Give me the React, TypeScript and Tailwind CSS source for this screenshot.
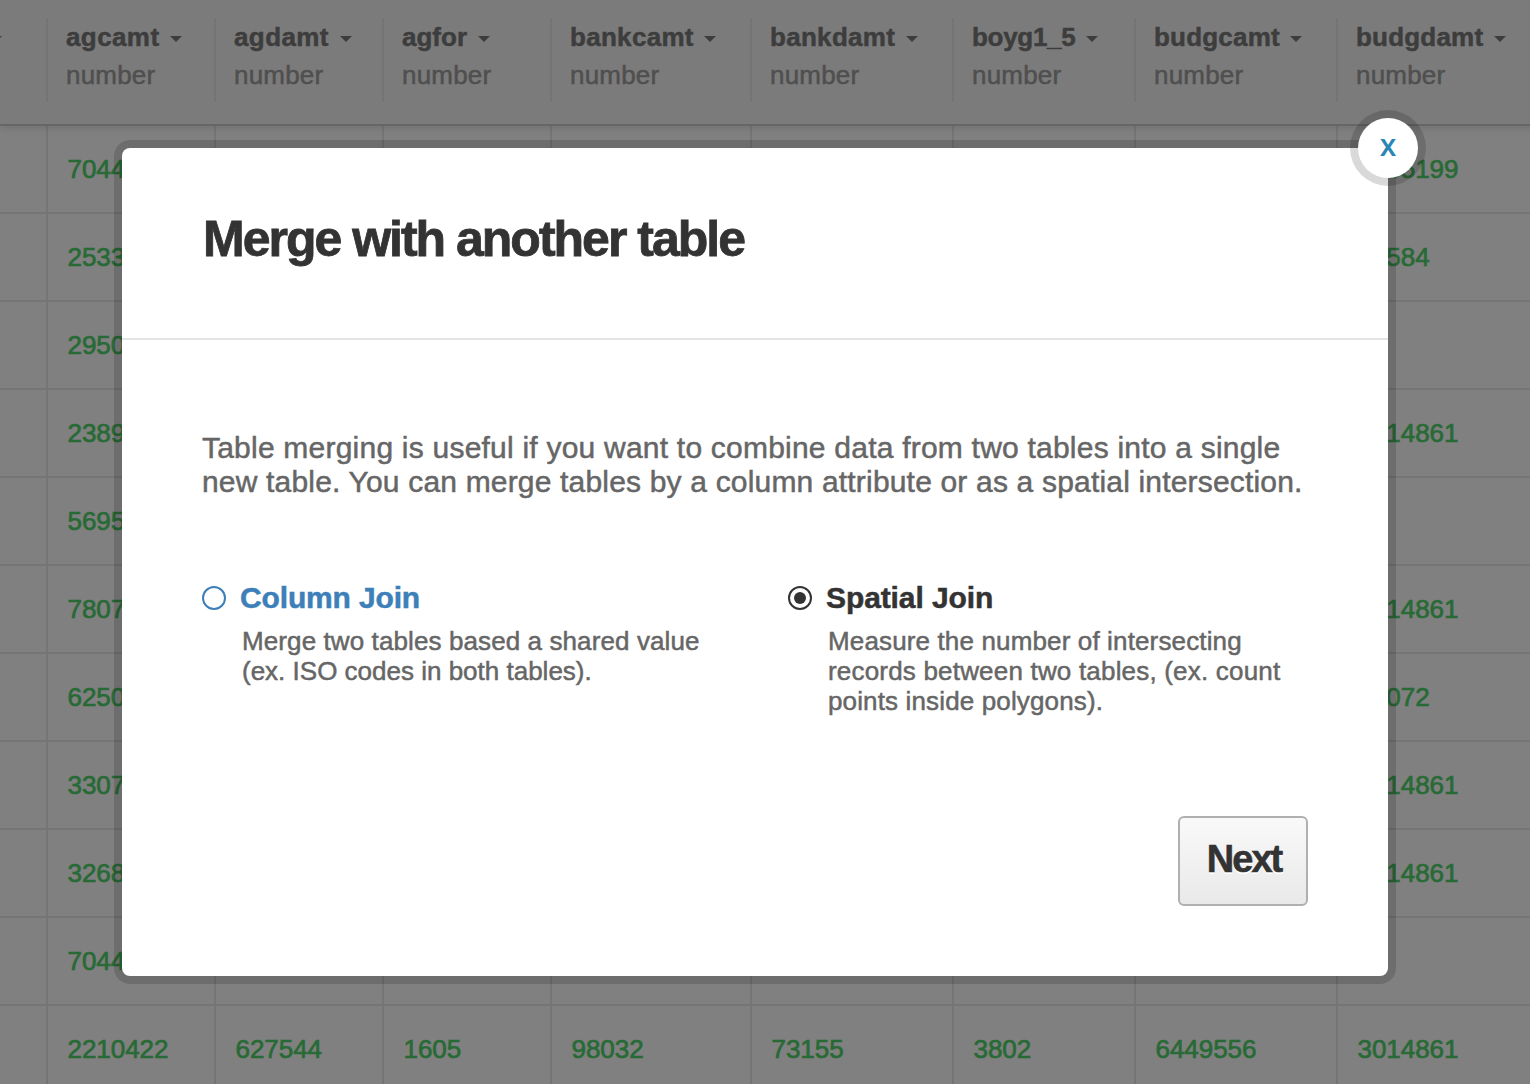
import React from "react";

type Column = { name: string; width: string; tracking: string; gap: string };

const columns: Column[] = [
  { name: "agcamt", width: "w-[168px]", tracking: "tracking-[0.4px]", gap: "left-[122px]" },
  { name: "agdamt", width: "w-[168px]", tracking: "tracking-[0.4px]", gap: "left-[124px]" },
  { name: "agfor", width: "w-[168px]", tracking: "tracking-[0px]", gap: "left-[94px]" },
  { name: "bankcamt", width: "w-[200px]", tracking: "tracking-[0.3px]", gap: "left-[152px]" },
  { name: "bankdamt", width: "w-[202px]", tracking: "tracking-[0.3px]", gap: "left-[154px]" },
  { name: "boyg1_5", width: "w-[182px]", tracking: "tracking-[-0.3px]", gap: "left-[132px]" },
  { name: "budgcamt", width: "w-[202px]", tracking: "tracking-[0.2px]", gap: "left-[154px]" },
  { name: "budgdamt", width: "w-[202px]", tracking: "tracking-[0.2px]", gap: "left-[156px]" },
];

const rows: string[][] = [
  ["7044", "", "", "", "", "", "", "3305199"],
  ["2533", "", "", "", "", "", "", "32584"],
  ["2950", "", "", "", "", "", "", ""],
  ["2389", "", "", "", "", "", "", "3014861"],
  ["5695", "", "", "", "", "", "", ""],
  ["7807", "", "", "", "", "", "", "3014861"],
  ["6250", "", "", "", "", "", "", "30072"],
  ["3307", "", "", "", "", "", "", "3014861"],
  ["3268", "", "", "", "", "", "", "3014861"],
  ["7044", "", "", "", "", "", "", ""],
  ["2210422", "627544", "1605", "98032", "73155", "3802", "6449556", "3014861"],
];

function Caret() {
  return (
    <svg width="12" height="6" viewBox="0 0 12 6" className="block fill-[#3d3d3d]">
      <path d="M0 0H12L6 6Z" />
    </svg>
  );
}

function HeaderRow() {
  return (
    <div className="relative flex h-[126px] w-[1600px] border-b-2 border-[#666666] bg-[#7b7b7b] shadow-[0_2px_8px_rgba(0,0,0,0.12)]">
      <div className="relative mt-[18px] h-[84px] w-12 shrink-0 border-r-2 border-[#747474]">
        <div className="absolute -left-[10px] top-[18px]"><Caret /></div>
      </div>
      {columns.map((c) => (
        <div key={c.name} className={`relative mt-[18px] h-[84px] shrink-0 border-r-2 border-[#747474] pl-[18px] ${c.width}`}>
          <div className={`h-[38px] text-[26px] leading-[38px] font-bold text-[#3d3d3d] [-webkit-text-stroke:0.5px] ${c.tracking}`}>{c.name}</div>
          <div className="text-[26px] leading-[38px] tracking-[0.2px] text-[#4f4f4f] [-webkit-text-stroke:0.5px]">number</div>
          <div className={`absolute top-[18px] ${c.gap}`}><Caret /></div>
        </div>
      ))}
    </div>
  );
}

function Radio({ checked }: { checked?: boolean }) {
  return (
    <span className={`mt-[14px] flex size-6 shrink-0 items-center justify-center rounded-full border-2 ${checked ? "border-[#333333]" : "border-[#3d7fb8]"}`}>
      {checked && <span className="size-3 rounded-full bg-[#333333]" />}
    </span>
  );
}

export default function App() {
  return (
    <div className="relative h-[1084px] w-[1530px] overflow-hidden bg-[#808080] font-['Liberation_Sans',Arial,sans-serif] whitespace-nowrap">
      <HeaderRow />
      {rows.map((row, i) => (
        <div key={i} className="flex h-[88px] w-[1600px] border-b-2 border-[#757575]">
          <div className="w-12 shrink-0 border-r-2 border-[#757575]" />
          {row.map((v, j) => (
            <div key={j} className={`shrink-0 border-r-2 border-[#757575] pl-[19.5px] text-[26px] leading-[86px] tracking-[-0.05px] text-[#286a35] [-webkit-text-stroke:0.7px] ${columns[j].width}`}>
              {v}
            </div>
          ))}
        </div>
      ))}

      <div className="absolute left-[122px] top-[148px] h-[828px] w-[1266px] rounded-lg bg-white shadow-[0_0_0_8px_rgba(0,0,0,0.15)]">
        <div className="h-[192px] border-b-2 border-[#e4e4e4] pl-[81px] pt-[61px]">
          <h1 className="text-[50px] leading-[60px] font-bold tracking-[-2px] text-[#333333] [-webkit-text-stroke:0.8px]">Merge with another table</h1>
        </div>
        <div className="px-20 pt-[91px]">
          <p className="text-[30px] leading-[34px] text-[#666666] [-webkit-text-stroke:0.5px]">
            <span className="tracking-[0.22px]">Table merging is useful if you want to combine data from two tables into a single</span>
            <br />
            <span className="tracking-[0.18px]">new table. You can merge tables by a column attribute or as a spatial intersection.</span>
          </p>
          <div className="mt-[73px] flex h-[200px]">
            <div className="flex w-[586px] gap-[14px]">
              <Radio />
              <div>
                <h2 className="text-[30px] leading-[52px] font-bold tracking-[-0.15px] text-[#3d7fb8] [-webkit-text-stroke:0.5px]">Column Join</h2>
                <p className="pl-[2px] pt-[2px] text-[26px] leading-[30px] text-[#666666] [-webkit-text-stroke:0.5px]">
                  <span className="tracking-[0.1px]">Merge two tables based a shared value</span>
                  <br />
                  (ex. ISO codes in both tables).
                </p>
              </div>
            </div>
            <div className="flex gap-[14px]">
              <Radio checked />
              <div>
                <h2 className="text-[30px] leading-[52px] font-bold tracking-[-0.1px] text-[#333333] [-webkit-text-stroke:0.5px]">Spatial Join</h2>
                <p className="pl-[2px] pt-[2px] text-[26px] leading-[30px] tracking-[0.14px] text-[#666666] [-webkit-text-stroke:0.5px]">
                  Measure the number of intersecting
                  <br />
                  <span className="tracking-[0.19px]">records between two tables, (ex. count</span>
                  <br />
                  points inside polygons).
                </p>
              </div>
            </div>
          </div>
          <div className="mt-11 flex justify-end">
            <button className="h-[90px] w-[130px] rounded-md border-2 border-[#b0b0b0] bg-linear-to-b from-[#f9f9f9] to-[#e9e9e9] pb-1 pl-[2px] text-[38px] font-bold tracking-[-2px] text-[#333333] [text-shadow:0_2px_0_#fff] [-webkit-text-stroke:0.6px]">
              Next
            </button>
          </div>
        </div>
        <button className="absolute -right-[30px] -top-[30px] flex size-[60px] items-center justify-center rounded-full bg-white pb-[7px] font-['Open_Sans',sans-serif] text-[30px] leading-none font-semibold text-[#2b86b5] shadow-[0_0_0_8px_rgba(0,0,0,0.15)]">
          x
        </button>
      </div>
    </div>
  );
}
